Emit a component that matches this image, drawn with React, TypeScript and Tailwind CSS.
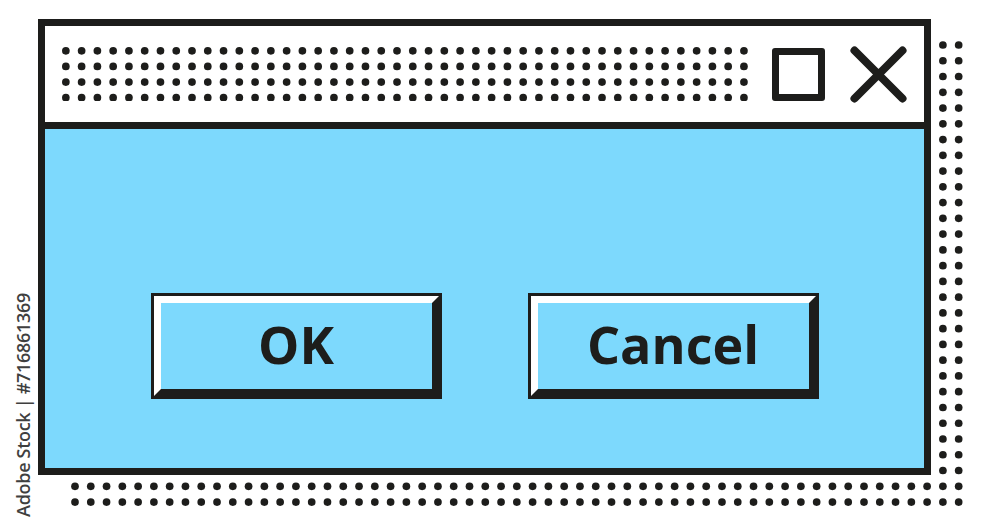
import React from "react";

const INK = "#1d1d1b";

// Dotted drop shadow behind the dialog: only the strips that peek out
// past the window's right and bottom edges are drawn.
function ShadowDots() {
  const cols = 57;
  const rows = 30;
  const sx = 15.78;
  const sy = 15.76;
  const dots: { x: number; y: number }[] = [];
  for (let r = 0; r < rows; r++) {
    for (let c = 0; c < cols; c++) {
      if (c >= cols - 2 || r >= rows - 2) {
        dots.push({ x: 75 + c * sx, y: 45 + r * sy });
      }
    }
  }
  return (
    <svg
      className="absolute left-0 top-0"
      width={1000}
      height={526}
      viewBox="0 0 1000 526"
    >
      {dots.map((d, i) => (
        <circle key={i} cx={d.x} cy={d.y} r={3.85} fill={INK} />
      ))}
    </svg>
  );
}

// Grip texture in the title bar.
function TitleDots() {
  const cols = 44;
  const rows = 4;
  const sx = 15.77;
  const sy = 15.6;
  const r = 3.85;
  const w = (cols - 1) * sx + r * 2;
  const h = (rows - 1) * sy + r * 2;
  const dots: React.ReactElement[] = [];
  for (let j = 0; j < rows; j++) {
    for (let i = 0; i < cols; i++) {
      dots.push(
        <circle key={`${i}-${j}`} cx={r + i * sx} cy={r + j * sy} r={r} fill={INK} />
      );
    }
  }
  return (
    <svg width={w} height={h} viewBox={`0 0 ${w} ${h}`} className="shrink-0">
      {dots}
    </svg>
  );
}

function BevelButton({ label }: { label: string }) {
  return (
    <div className="w-[291px] h-[106px] border-[3px] border-[#1d1d1b] bg-[#7dd9fd]">
      <div className="w-full h-full border-[7px] border-t-white border-l-white border-r-[#1d1d1b] border-b-[#1d1d1b] flex items-center justify-center pb-[4px]">
        <span
          className="text-[52px] leading-none font-bold text-[#1d1d1b]"
          style={{ fontFamily: '"Open Sans", "Liberation Sans", sans-serif' }}
        >
          {label}
        </span>
      </div>
    </div>
  );
}

export default function App() {
  return (
    <div className="relative w-[1000px] h-[526px] bg-white overflow-hidden">
      <ShadowDots />

      <div className="relative z-10 ml-[38px] mt-[19px] w-[893px] h-[456px] border-[7px] border-[#1d1d1b] flex flex-col">
        {/* title bar */}
        <div className="h-[103px] shrink-0 bg-white border-b-[7px] border-[#1d1d1b] flex items-center pl-[17px]">
          <TitleDots />
          <div className="ml-[24px] w-[53px] h-[53px] border-[7px] border-[#1d1d1b] rounded-[3px] shrink-0" />
          <svg width={57} height={57} viewBox="0 0 57 57" className="ml-[25px] shrink-0">
            <path
              d="M4.5 4.5 L52.5 52.5 M52.5 4.5 L4.5 52.5"
              stroke={INK}
              strokeWidth={8}
              strokeLinecap="round"
              fill="none"
            />
          </svg>
        </div>

        {/* body */}
        <div className="flex-1 bg-[#7dd9fd] flex justify-center items-start gap-[86px] pt-[164px]">
          <BevelButton label="OK" />
          <BevelButton label="Cancel" />
        </div>
      </div>

      <div
        className="absolute left-[23px] top-[405px] -translate-x-1/2 -translate-y-1/2 -rotate-90 whitespace-nowrap text-[18px] tracking-[-0.3px] leading-none font-semibold text-[#3f3f3f]"
        style={{ fontFamily: '"Open Sans", "Liberation Sans", sans-serif' }}
      >
        Adobe Stock | #716861369
      </div>
    </div>
  );
}
